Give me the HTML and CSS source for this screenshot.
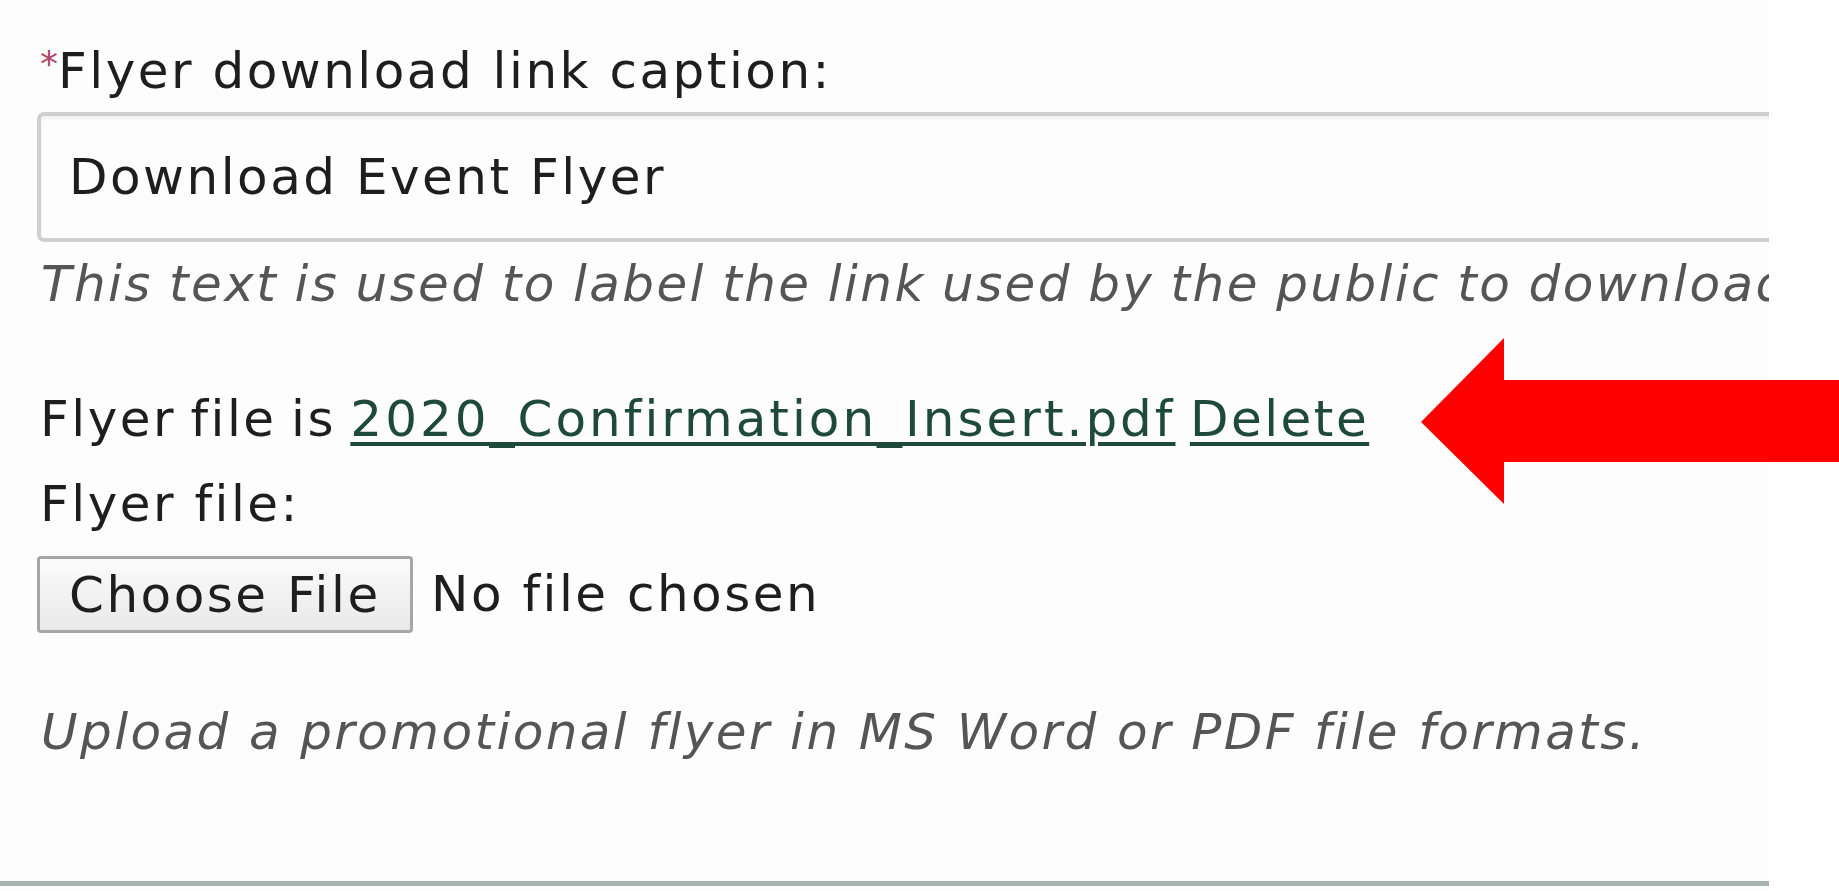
FILE: index.html
```html
<!DOCTYPE html>
<html lang="en">
<head>
<meta charset="utf-8">
<title>Flyer settings</title>
<link rel="stylesheet" href="styles.css">
</head>
<body>
<div class="page">
  <form class="content">
    <div class="field">
      <label class="label" for="caption"><span class="req">*</span>Flyer download link caption:</label>
      <input class="text-input" id="caption" type="text" value="Download Event Flyer">
      <p class="help">This text is used to label the link used by the public to download the event flyer.</p>
    </div>
    <div class="field file-field">
      <p class="file-current">Flyer file is <a href="#" class="link file-link">2020_Confirmation_Insert.pdf</a> <a href="#" class="link">Delete</a></p>
      <p class="file-label">Flyer file:</p>
      <div class="file-row">
        <button type="button" class="file-btn">Choose File</button>
        <span class="file-status">No file chosen</span>
      </div>
      <p class="help upload-help">Upload a promotional flyer in MS Word or PDF file formats.</p>
    </div>
    <hr class="rule">
  </form>
  <svg class="arrow" width="418" height="166" viewBox="0 0 418 166" aria-hidden="true">
    <polygon points="0,84 83,0 83,42 418,42 418,124 83,124 83,166" fill="#ff0000"/>
  </svg>
</div>
</body>
</html>
```
FILE: styles.css
```css
html, body {
  margin: 0;
  padding: 0;
  background: #ffffff;
}

.page {
  position: relative;
  width: 1839px;
  height: 891px;
  overflow: hidden;
  display: flex;
}

.content {
  flex: 0 0 1769px;
  width: 1769px;
  box-sizing: border-box;
  padding: 34px 0 0 37px;
  background: #fdfdfd;
  overflow: hidden;
  white-space: nowrap;
  font-family: "DejaVu Sans", sans-serif;
  font-size: 50px;
  letter-spacing: 2.5px;
  color: #1e1e1e;
}

.field {
  display: flex;
  flex-direction: column;
  align-items: flex-start;
}

.label {
  display: block;
  line-height: 60px;
  padding-left: 3px;
}

.req {
  color: #b0456a;
  font-size: 36px;
  letter-spacing: 0;
  vertical-align: 12px;
}

.text-input {
  margin-top: 11px;
  width: 1900px;
  height: 130px;
  box-sizing: border-box;
  padding: 0 28px;
  border: 4px solid #cfcfcf;
  border-radius: 7px;
  background: #fdfdfd;
  box-shadow: inset 0 3px 4px rgba(0, 0, 0, 0.05);
  font: inherit;
  letter-spacing: inherit;
  color: #1e1e1e;
  outline: none;
}

.help {
  margin: 12px 0 0 4px;
  line-height: 60px;
  font-style: italic;
  letter-spacing: 2.4px;
  word-spacing: -2px;
  color: #555555;
}

.file-field {
  margin-top: 63px;
}

.file-current,
.file-label {
  margin: 0 0 0 3px;
  line-height: 85px;
}

.file-current {
  word-spacing: -4px;
}

.link {
  color: #1f4a3b;
  text-decoration: underline;
  text-decoration-thickness: 4px;
  text-underline-offset: 6px;
  word-spacing: 0;
}

.file-link {
  letter-spacing: 3px;
}

.file-row {
  margin-top: 9px;
  display: flex;
  align-items: center;
  gap: 18px;
}

.file-btn {
  height: 77px;
  width: 376px;
  box-sizing: border-box;
  padding: 0 0 0 29px;
  text-align: left;
  border: 3px solid #a6a6a6;
  border-radius: 4px;
  background: linear-gradient(#fbfbfb, #e9e9e9);
  font: inherit;
  letter-spacing: inherit;
  color: #1e1e1e;
}

.file-status {
  line-height: 77px;
}

.upload-help {
  margin-top: 69px;
  word-spacing: 0;
  letter-spacing: 2.4px;
}

.rule {
  margin: 119px 0 0 -37px;
  width: 1769px;
  height: 5px;
  border: 0;
  background: #a7b1ae;
}

.arrow {
  position: absolute;
  left: 1421px;
  top: 338px;
}
```
